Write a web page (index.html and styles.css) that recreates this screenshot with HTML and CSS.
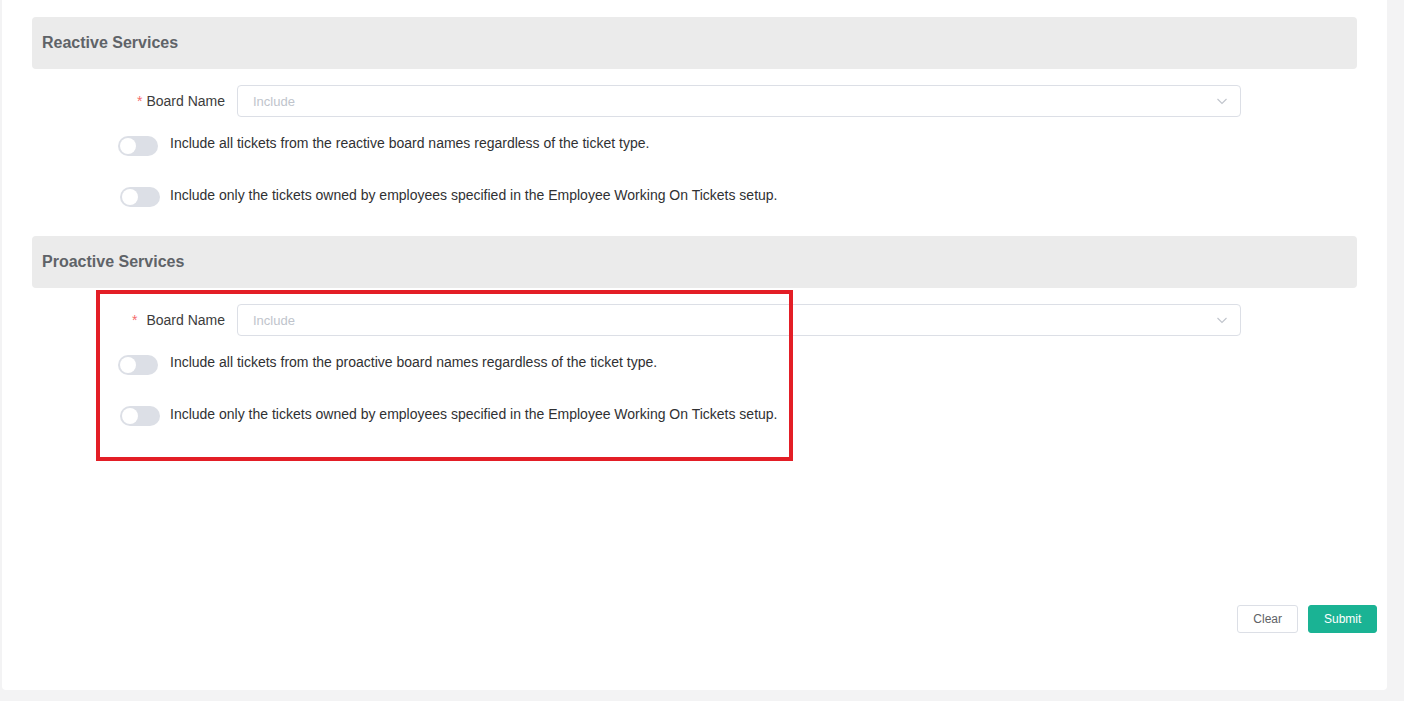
FILE: index.html
```html
<!DOCTYPE html>
<html lang="en">
<head>
    <meta charset="UTF-8">
    <meta name="viewport" content="width=device-width, initial-scale=1.0">
    <title>Services Setup</title>
    <link rel="stylesheet" href="styles.css">
</head>
<body>
    <div class="card">
        <div class="section-title">Reactive Services</div>
        <div class="form-item">
            <label class="item-label"><span class="req">*</span>Board Name</label>
            <div class="select">
                <span class="placeholder">Include</span>
                <svg class="arrow" width="12" height="12" viewBox="0 0 12 12"><path d="M1.5 4l4.5 4.5L10.5 4" fill="none" stroke="#c0c4cc" stroke-width="1.1"/></svg>
            </div>
        </div>
        <div class="switch-row first">
            <span class="switch"></span>
            <span class="switch-text">Include all tickets from the reactive board names regardless of the ticket type.</span>
        </div>
        <div class="switch-row second">
            <span class="switch shift"></span>
            <span class="switch-text">Include only the tickets owned by employees specified in the Employee Working On Tickets setup.</span>
        </div>

        <div class="section-title gap">Proactive Services</div>
        <div class="marked">
            <div class="form-item">
                <label class="item-label"><span class="req wide">*</span>Board Name</label>
                <div class="select">
                    <span class="placeholder">Include</span>
                    <svg class="arrow" width="12" height="12" viewBox="0 0 12 12"><path d="M1.5 4l4.5 4.5L10.5 4" fill="none" stroke="#c0c4cc" stroke-width="1.1"/></svg>
                </div>
            </div>
            <div class="switch-row first">
                <span class="switch"></span>
                <span class="switch-text">Include all tickets from the proactive board names regardless of the ticket type.</span>
            </div>
            <div class="switch-row second">
                <span class="switch shift"></span>
                <span class="switch-text">Include only the tickets owned by employees specified in the Employee Working On Tickets setup.</span>
            </div>
            <div class="mark-box"></div>
        </div>

        <div class="footer">
            <button class="btn">Clear</button>
            <button class="btn primary">Submit</button>
        </div>
    </div>
</body>
</html>
```

FILE: styles.css
```css
body {
    margin: 0;
    background-color: #f3f3f4;
    font-family: Arial, "Liberation Sans", sans-serif;
    font-size: 14px;
    color: #303133;
}

.card {
    margin-left: 2px;
    width: 1385px;
    height: 690px;
    box-sizing: border-box;
    background: #ffffff;
    border-radius: 0 0 4px 4px;
    padding-top: 17px;
    display: flex;
    flex-direction: column;
}

.section-title {
    margin: 0 30px;
    height: 52px;
    line-height: 52px;
    padding-left: 10px;
    background: #ebebeb;
    border-radius: 4px;
    font-size: 16px;
    font-weight: bold;
    color: #5f6368;
}

.section-title.gap {
    margin-top: 29px;
}

.form-item {
    display: flex;
    align-items: center;
    margin-top: 16px;
}

.item-label {
    width: 235px;
    box-sizing: border-box;
    padding-right: 12px;
    text-align: right;
    color: #3c3c3c;
}

.req {
    color: #f56c6c;
    margin-right: 4px;
}

.req.wide {
    margin-right: 9px;
}

.select {
    width: 1004px;
    height: 32px;
    box-sizing: border-box;
    border: 1px solid #dcdfe6;
    border-radius: 4px;
    display: flex;
    align-items: center;
    justify-content: space-between;
    padding: 0 12px 0 15px;
}

.placeholder {
    color: #c0c4cc;
    font-size: 13px;
}

.switch-row {
    display: flex;
    align-items: center;
    padding-left: 116px;
}

.switch-row.first {
    margin-top: 19px;
}

.switch-row.second {
    margin-top: 31px;
}

.switch {
    position: relative;
    width: 40px;
    height: 20px;
    border-radius: 10px;
    background: #dcdfe6;
    margin-right: 12px;
}

.switch::after {
    content: "";
    position: absolute;
    top: 2px;
    left: 2px;
    width: 16px;
    height: 16px;
    border-radius: 50%;
    background: #ffffff;
}

.switch.shift {
    margin-left: 2px;
    margin-right: 10px;
}

.switch-text {
    color: #303133;
    position: relative;
    top: -3px;
}

.switch-row.second .switch-text {
    top: -2px;
}

.marked {
    position: relative;
}

/* annotation frame drawn over the proactive block */
.mark-box {
    position: absolute;
    left: 94px;
    top: 2px;
    width: 697px;
    height: 171px;
    box-sizing: border-box;
    border: 4px solid #e31e26;
}

.footer {
    margin-top: auto;
    display: flex;
    justify-content: flex-end;
    gap: 10px;
    padding: 0 10px 57px 0;
}

.btn {
    height: 28px;
    padding: 0 15px;
    font-family: Arial, "Liberation Sans", sans-serif;
    font-size: 12px;
    border: 1px solid #dcdfe6;
    border-radius: 3px;
    background: #ffffff;
    color: #606266;
}

.btn.primary {
    background: #1ab394;
    border-color: #1ab394;
    color: #ffffff;
    width: 69px;
}
```
